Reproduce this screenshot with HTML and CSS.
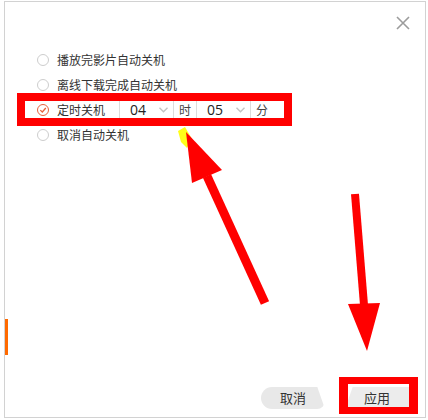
FILE: index.html
```html
<!DOCTYPE html>
<html lang="zh">
<head>
<meta charset="utf-8">
<title>定时关机</title>
<link rel="stylesheet" href="styles.css">
</head>
<body>
<div class="dialog">
  <div class="header">
    <svg class="close" width="14" height="14" viewBox="0 0 14 14"><path d="M1 1L13 13M13 1L1 13" stroke="#9c9c9c" stroke-width="1.6" fill="none"/></svg>
  </div>
  <div class="options">
    <div class="row"><span class="radio"></span><span class="label">播放完影片自动关机</span></div>
    <div class="row"><span class="radio"></span><span class="label">离线下载完成自动关机</span></div>
    <div class="row">
      <span class="radio checked"><svg width="12" height="12" viewBox="0 0 12 12"><path d="M3.3 6.1L5.3 8L8.8 4" stroke="#e8603c" stroke-width="1.3" fill="none"/></svg></span>
      <span class="label">定时关机</span>
      <div class="timegroup">
        <div class="select"><span class="val">04</span><svg class="chev" width="9" height="6" viewBox="0 0 9 6"><path d="M0.5 0.8L4.5 4.8L8.5 0.8" stroke="#c4c4c4" stroke-width="1.4" fill="none"/></svg></div>
        <div class="unit">时</div>
        <div class="select"><span class="val">05</span><svg class="chev" width="9" height="6" viewBox="0 0 9 6"><path d="M0.5 0.8L4.5 4.8L8.5 0.8" stroke="#c4c4c4" stroke-width="1.4" fill="none"/></svg></div>
        <div class="unit">分</div>
      </div>
    </div>
    <div class="row"><span class="radio"></span><span class="label">取消自动关机</span></div>
  </div>
  <div class="footer">
    <button class="btn btn-cancel">取消</button>
    <button class="btn btn-apply">应用</button>
  </div>
  <div class="side-mark"></div>
</div>

<div class="mark mark-row"></div>
<div class="mark mark-apply"></div>
<svg class="arrows" width="428" height="420" viewBox="0 0 428 420">
  <polygon points="178,131 185,127 192,139 187,148 181,142" fill="#ffff00" opacity="0.9"/>
  <line x1="207" y1="176" x2="265" y2="303" stroke="#ff0000" stroke-width="9"/>
  <polygon points="186,132 192,183 222,170" fill="#ff0000"/>
  <line x1="355" y1="194" x2="364" y2="305" stroke="#ff0000" stroke-width="8"/>
  <polygon points="348,304 380,303 367,351" fill="#ff0000"/>
</svg>
</body>
</html>
```
FILE: styles.css
```css
html, body {
  margin: 0;
  padding: 0;
  background: #ffffff;
}
body {
  font-family: "Noto Sans CJK SC", "Noto Sans", sans-serif;
  color: #333333;
  width: 428px;
  height: 420px;
  position: relative;
  overflow: hidden;
}
.dialog {
  margin: 1px 0 0 4px;
  width: 422px;
  height: 417px;
  box-sizing: border-box;
  border: 1px solid #d2d2d2;
  display: flex;
  flex-direction: column;
  position: relative;
  background: #fff;
}
.header {
  height: 45px;
  display: flex;
  justify-content: flex-end;
  align-items: flex-start;
  padding-right: 15px;
}
.close {
  margin-top: 14px;
  display: block;
}
.options {
  padding-left: 32px;
  display: flex;
  flex-direction: column;
}
.row {
  height: 25px;
  display: flex;
  align-items: center;
}
.radio {
  width: 12px;
  height: 12px;
  box-sizing: border-box;
  border: 1px solid #cdcdcd;
  border-radius: 50%;
  margin-right: 8px;
  position: relative;
  flex: none;
}
.radio.checked {
  border-color: #e8603c;
}
.radio.checked svg {
  position: absolute;
  left: -1px;
  top: -1px;
}
.label {
  font-size: 12px;
  line-height: 17px;
  color: #333;
  white-space: nowrap;
}
.timegroup {
  margin-left: 14px;
  display: flex;
  height: 17px;
}
.select, .unit {
  border-left: 1px solid #dcdcdc;
  height: 17px;
  display: flex;
  align-items: center;
  box-sizing: border-box;
}
.select {
  width: 54px;
  padding-left: 10px;
  padding-right: 5px;
  justify-content: space-between;
}
.val {
  font-size: 14px;
  font-family: "Open Sans", "Noto Sans", sans-serif;
  color: #222;
  line-height: 17px;
}
.chev {
  display: block;
}
.unit {
  width: 23px;
  padding-left: 5px;
  font-size: 12px;
  color: #444;
}
.footer {
  margin-top: auto;
  display: flex;
  justify-content: flex-end;
  gap: 20px;
  padding: 0 16px 8px 0;
}
.btn {
  width: 64px;
  height: 22px;
  border: none;
  padding: 0;
  font-family: "Noto Sans CJK SC", sans-serif;
  font-size: 13px;
  color: #333;
  background: #e8e8e8;
  line-height: 22px;
}
.btn-cancel {
  border-radius: 11px 2px 8px 11px;
  clip-path: polygon(0 0, 88% 0, 100% 100%, 0 100%);
}
.btn-apply {
  background: #ececec;
  clip-path: polygon(12% 0, 100% 0, 100% 100%, 0 100%);
}
.side-mark {
  position: absolute;
  left: 0;
  top: 317px;
  width: 3px;
  height: 36px;
  background: #ff6a00;
}
.mark {
  position: absolute;
  box-sizing: border-box;
  border: 8px solid #ff0000;
  pointer-events: none;
}
.mark-row {
  left: 17px;
  top: 93px;
  width: 275px;
  height: 33px;
}
.mark-apply {
  left: 339px;
  top: 377px;
  width: 79px;
  height: 37px;
  border-width: 7px 9px;
}
.arrows {
  position: absolute;
  left: 0;
  top: 0;
  pointer-events: none;
}
```
